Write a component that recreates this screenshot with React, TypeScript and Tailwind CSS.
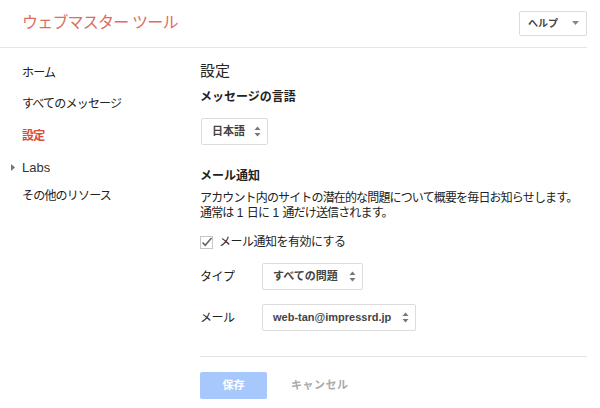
const font = "font-['Liberation_Sans','Noto_Sans_CJK_JP',sans-serif]";

const Arrows = () => (
  <svg width="7" height="11" viewBox="0 0 7 11" className="text-[#777]">
    <path d="M3.5 0.5L6.5 4H0.5Z" fill="currentColor" />
    <path d="M3.5 10.5L6.5 7H0.5Z" fill="currentColor" />
  </svg>
);

const Select = ({ label, width }: { label: string; width: string }) => (
  <div
    className={`${width} h-[27px] flex items-center justify-between pl-[10px] pr-[6px] border border-[#dcdcdc] rounded-[2px] bg-white text-[11px] font-bold text-[#444] leading-none tracking-normal`}
  >
    <span>{label}</span>
    <Arrows />
  </div>
);

const navItems = [
  { label: "ホーム", h: "h-[31px]" },
  { label: "すべてのメッセージ", h: "h-[32px]" },
  { label: "設定", active: true, h: "h-[32px]" },
  { label: "Labs", caret: true, h: "h-[31px]" },
  { label: "その他のリソース", h: "h-[26px]" },
];

export default function App() {
  return (
    <div className={`${font} w-[600px] h-[408px] bg-white text-[#222] overflow-hidden`}>
      {/* Header */}
      <div className="h-[48px] mr-[13px] border-b border-[#e5e5e5] flex items-center justify-between pl-[22px]">
        <div className="text-[16px] text-[#e06c5c] tracking-[-0.8px] mb-[2px]">ウェブマスター ツール</div>
        <div className="w-[68px] h-[25px] border border-[#dcdcdc] rounded-[2px] flex items-center justify-between pl-[8px] pr-[7px] text-[10px] font-bold text-[#444] mb-[1px]">
          <span>ヘルプ</span>
          <svg width="7" height="4" viewBox="0 0 7 4">
            <path d="M0 0H7L3.5 4Z" fill="#888" />
          </svg>
        </div>
      </div>

      <div className="flex">
        {/* Sidebar */}
        <div className="w-[200px] shrink-0 pt-[9px] text-[12px] tracking-[-0.8px]">
          {navItems.map((item) => (
            <div
              key={item.label}
              className={`${item.h} flex items-center relative pl-[22px] ${
                item.active ? "text-[#dd4b39] font-bold" : "text-[#222]"
              } ${item.caret ? "text-[13px] tracking-normal text-[#333]" : ""}`}
            >
              {item.caret && (
                <svg width="4" height="7" viewBox="0 0 4 7" className="absolute left-[11px] top-[12px]">
                  <path d="M0 0L4 3.5L0 7Z" fill="#777" />
                </svg>
              )}
              {item.label}
            </div>
          ))}
        </div>

        {/* Main */}
        <div className="flex-1 mr-[13px] pt-[13px]">
          <div className="text-[15px] text-[#222] leading-[20px]">設定</div>
          <div className="mt-[8px] text-[12px] font-bold leading-[16px]">メッセージの言語</div>
          <div className="mt-[13px] ml-[1px]">
            <Select label="日本語" width="w-[67px]" />
          </div>

          <div className="mt-[23px] text-[12px] font-bold leading-[16px]">メール通知</div>
          <div className="mt-[7px] text-[12px] leading-[15px] tracking-[-0.85px]">
            アカウント内のサイトの潜在的な問題について概要を毎日お知らせします。
            <br />
            通常は<span className="tracking-normal"> 1 </span>日に<span className="tracking-normal"> 1 </span>通だけ送信されます。
          </div>

          <div className="mt-[13px] h-[16px] flex items-center gap-[6px] text-[12px]">
            <svg width="13" height="13" viewBox="0 0 13 13">
              <rect x="0.5" y="0.5" width="12" height="12" fill="white" stroke="#c6c6c6" />
              <path d="M2.5 6.5L5.2 9.3L11.5 2" fill="none" stroke="#666" strokeWidth="1.6" />
            </svg>
            <span className="tracking-[-0.5px]">メール通知を有効にする</span>
          </div>

          <div className="mt-[13px] flex items-center text-[12px]">
            <span className="w-[62px] tracking-[-0.5px]">タイプ</span>
            <Select label="すべての問題" width="w-[101px]" />
          </div>
          <div className="mt-[14px] flex items-center text-[12px]">
            <span className="w-[62px] tracking-[-0.5px]">メール</span>
            <Select label="web-tan@impressrd.jp" width="w-[154px]" />
          </div>

          <div className="mt-[25px] border-t border-[#e5e5e5]" />

          <div className="mt-[15px] flex items-center">
            <div className="w-[67px] h-[27px] rounded-[2px] bg-[#a6c8fc] text-white text-[11px] font-bold flex items-center justify-center">
              保存
            </div>
            <div className="ml-[24px] text-[11px] font-bold text-[#aaa] tracking-[0.5px]">キャンセル</div>
          </div>
        </div>
      </div>
    </div>
  );
}
